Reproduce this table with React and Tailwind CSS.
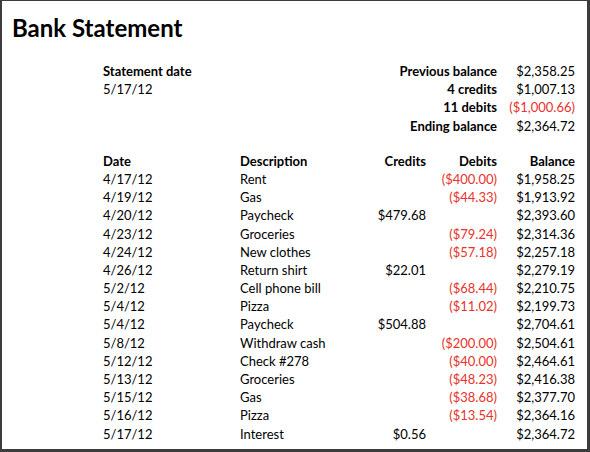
import React from 'react';

const summary = [
  { left: 'Statement date', bold: true, label: 'Previous balance', value: '$2,358.25' },
  { left: '5/17/12', bold: false, label: '4 credits', value: '$1,007.13' },
  { left: '', bold: false, label: '11 debits', value: '($1,000.66)', red: true },
  { left: '', bold: false, label: 'Ending balance', value: '$2,364.72' },
];

const rows = [
  ['4/17/12', 'Rent', '', '($400.00)', '$1,958.25'],
  ['4/19/12', 'Gas', '', '($44.33)', '$1,913.92'],
  ['4/20/12', 'Paycheck', '$479.68', '', '$2,393.60'],
  ['4/23/12', 'Groceries', '', '($79.24)', '$2,314.36'],
  ['4/24/12', 'New clothes', '', '($57.18)', '$2,257.18'],
  ['4/26/12', 'Return shirt', '$22.01', '', '$2,279.19'],
  ['5/2/12', 'Cell phone bill', '', '($68.44)', '$2,210.75'],
  ['5/4/12', 'Pizza', '', '($11.02)', '$2,199.73'],
  ['5/4/12', 'Paycheck', '$504.88', '', '$2,704.61'],
  ['5/8/12', 'Withdraw cash', '', '($200.00)', '$2,504.61'],
  ['5/12/12', 'Check #278', '', '($40.00)', '$2,464.61'],
  ['5/13/12', 'Groceries', '', '($48.23)', '$2,416.38'],
  ['5/15/12', 'Gas', '', '($38.68)', '$2,377.70'],
  ['5/16/12', 'Pizza', '', '($13.54)', '$2,364.16'],
  ['5/17/12', 'Interest', '$0.56', '', '$2,364.72'],
];

const cols = 'grid grid-cols-[137px_126px_60px_71px_78px] leading-[18.2px] h-[18.2px]';

export default function App() {
  return (
    <div className="w-[590px] h-[452px] bg-white text-black border-t border-l-2 border-r-[3px] border-b-[3px] border-[#3c3c3c] font-['Lato','Liberation_Sans',sans-serif] text-[13px] overflow-hidden">
      <h1 className="pl-[10px] pt-[12px] text-[24px] leading-[29px] font-bold">Bank Statement</h1>

      <div className="pl-[101px] mt-[20px]">
        {summary.map((s, i) => (
          <div key={i} className={cols}>
            <div className={`col-span-2 ${s.bold ? 'font-bold' : ''}`}>{s.left}</div>
            <div className="col-span-2 text-right font-bold">{s.label}</div>
            <div className={`text-right ${s.red ? 'text-[#e8322a]' : ''}`}>{s.value}</div>
          </div>
        ))}
      </div>

      <div className="pl-[101px] mt-[17px]">
        <div className={`${cols} font-bold`}>
          <div>Date</div>
          <div>Description</div>
          <div className="text-right">Credits</div>
          <div className="text-right">Debits</div>
          <div className="text-right">Balance</div>
        </div>
        {rows.map((r, i) => (
          <div key={i} className={cols}>
            <div>{r[0]}</div>
            <div>{r[1]}</div>
            <div className="text-right">{r[2]}</div>
            <div className="text-right text-[#e8322a]">{r[3]}</div>
            <div className="text-right">{r[4]}</div>
          </div>
        ))}
      </div>
    </div>
  );
}
